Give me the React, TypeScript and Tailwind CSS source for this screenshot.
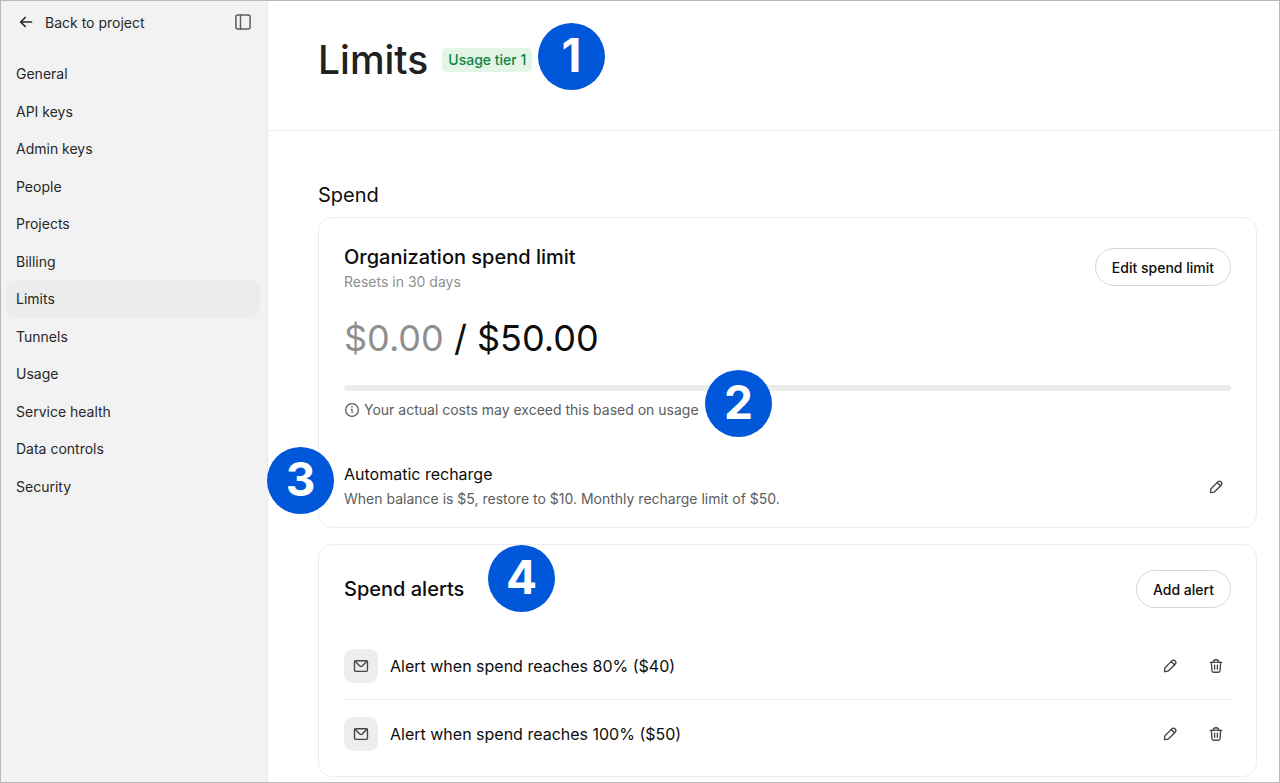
import type { ReactNode } from 'react';

const navItems = [
  'General',
  'API keys',
  'Admin keys',
  'People',
  'Projects',
  'Billing',
  'Limits',
  'Tunnels',
  'Usage',
  'Service health',
  'Data controls',
  'Security',
];

const alerts = ['Alert when spend reaches 80% ($40)', 'Alert when spend reaches 100% ($50)'];

function Icon({ className, children }: { className?: string; children: ReactNode }) {
  return (
    <svg
      viewBox="0 0 16 16"
      fill="none"
      stroke="currentColor"
      strokeWidth="1.35"
      strokeLinecap="round"
      strokeLinejoin="round"
      aria-hidden="true"
      className={className}
    >
      {children}
    </svg>
  );
}

function ArrowLeftIcon() {
  return (
    <svg viewBox="0 0 16 16" fill="none" stroke="currentColor" strokeWidth="1.7" strokeLinecap="round" strokeLinejoin="round" aria-hidden="true" className="size-4">
      <path d="M13.500 8H2.900M7.200 3.500 2.700 8l4.500 4.500" />
    </svg>
  );
}

function SidebarIcon() {
  return (
    <Icon className="size-4">
      <rect x="0.9" y="0.9" width="14.2" height="14.2" rx="2" strokeWidth="1.5" />
      <path d="M5.500 1v14" strokeWidth="1.4" />
    </Icon>
  );
}

function InfoIcon() {
  return (
    <Icon className="size-4">
      <circle cx="8" cy="8" r="6.400" strokeWidth="1.3" />
      <path d="M7.200 7.400H8.100v3.200" strokeWidth="1.2" />
      <circle cx="8" cy="5.100" r="0.8" fill="currentColor" stroke="none" />
    </Icon>
  );
}

function PencilIcon() {
  return (
    <Icon className="size-4">
      <path d="M2.500 13.600 2.700 10.900Q2.800 10 3.500 9.300L9.600 3.100Q11.500 1.300 13.200 2.900 14.700 4.600 13 6.400L6.800 12.500Q6.100 13.200 5.200 13.300Z" />
      <path d="M8.900 3.900Q9.700 3.900 10.900 5.100T12.200 7.100" />
    </Icon>
  );
}

function TrashIcon() {
  return (
    <Icon className="size-4">
      <path d="M2.300 4.300h11.400M5 4.200C5.300 2.600 6.300 1.700 8 1.700s2.700.9 3 2.500M3.400 4.500l.5 8.200q.1 1.500 1.600 1.500h5q1.500 0 1.600-1.500l.5-8.200M6.600 7.200v4M9.400 7.200v4" />
    </Icon>
  );
}

function MailIcon() {
  return (
    <Icon className="size-4">
      <rect x="1.500" y="2.700" width="13" height="10.600" rx="1.300" />
      <path d="M2.100 3.300 6.800 8q1.200 1.100 2.400 0l4.700-4.700" />
    </Icon>
  );
}

function IconButton({ label, children }: { label: string; children: ReactNode }) {
  return (
    <button type="button" aria-label={label} className="flex size-[30px] items-center justify-center rounded-full text-[#454545] hover:bg-gray-100">
      {children}
    </button>
  );
}

function PillButton({ children }: { children: ReactNode }) {
  return (
    <button type="button" className="h-[38px] shrink-0 rounded-full border border-[#d6d6d6] px-4 text-[14px] font-medium text-[#0d0d0d] hover:bg-gray-50">
      {children}
    </button>
  );
}

function Marker({ className, children }: { className: string; children: ReactNode }) {
  return (
    <span className={`absolute flex size-[67px] items-center justify-center rounded-full bg-[#0057d9] pb-[3px] text-[46px] leading-none font-bold text-white ${className}`}>
      {children}
    </span>
  );
}

export default function App() {
  return (
    <div className="flex min-h-screen border border-[#b9b9b9] bg-white font-['Inter','Liberation_Sans',sans-serif] text-[#0d0d0d]">
      <aside className="w-[267px] shrink-0 border-r border-[#e8e8e8] bg-[#f2f2f2] text-[14px] text-[#282828]">
        <div className="flex h-[42px] items-center justify-between pr-4 pl-[17px]">
          <a href="#project" className="flex items-center gap-[11px]">
            <ArrowLeftIcon />
            Back to project
          </a>
          <button type="button" aria-label="Toggle sidebar" className="text-[#5d5d5d]">
            <SidebarIcon />
          </button>
        </div>
        <nav aria-label="Settings" className="mt-3 pr-[7px] pl-[5px]">
          <ul className="grid h-[450px] auto-rows-fr">
            {navItems.map((item) => (
              <li key={item} className="grid">
                <a
                  href={`#${item.toLowerCase().replace(' ', '-')}`}
                  aria-current={item === 'Limits' ? 'page' : undefined}
                  className={item === 'Limits' ? 'flex items-center rounded-[10px] bg-[#ececec] px-[10px]' : 'flex items-center px-[10px]'}
                >
                  {item}
                </a>
              </li>
            ))}
          </ul>
        </nav>
      </aside>

      <main className="min-w-0 flex-1">
        <header className="relative flex h-[130px] gap-[14px] border-b border-[#ededed] pt-[35px] pl-[50px]">
          <h1 className="text-[39px] leading-[48px] font-medium text-[#212121]">Limits</h1>
          <span className="mt-3 h-6 rounded-[5px] bg-[#e3f5e7] px-[6px] text-[14px] leading-6 font-medium text-[#0c8440]">Usage tier 1</span>
          <Marker className="top-[22px] left-[270px]">1</Marker>
        </header>

        <div className="pt-[50px] pr-[22px] pb-[5px] pl-[50px]">
          <h2 className="text-[20px] leading-7">Spend</h2>

          <section aria-labelledby="spend-limit" className="relative mt-2 rounded-[14px] border border-[#ededed] px-[25px] pt-[25px] pb-4">
            <div className="flex items-start justify-between">
              <div>
                <h3 id="spend-limit" className="text-[20px] leading-7 font-medium">Organization spend limit</h3>
                <p className="text-[14px] leading-[22px] text-[#8f8f8f]">Resets in 30 days</p>
              </div>
              <div className="pt-[5px]">
                <PillButton>Edit spend limit</PillButton>
              </div>
            </div>
            <p className="mt-[22px] text-[36px] leading-[46px]">
              <span className="text-[#8f8f8f]">$0.00</span> / $50.00
            </p>
            <div role="progressbar" aria-label="Organization spend" aria-valuemin={0} aria-valuemax={50} aria-valuenow={0} className="mt-6 h-[6px] rounded-full bg-[#ececec]" />
            <p className="mt-2 flex items-center gap-1 text-[14px] leading-[22px] text-[#5d5d5d]">
              <InfoIcon />
              Your actual costs may exceed this based on usage
            </p>
            <div className="mt-[41px] flex items-center justify-between">
              <div>
                <h4 className="text-[16px] leading-6">Automatic recharge</h4>
                <p className="mt-px text-[14px] leading-6 text-[#5d5d5d]">When balance is $5, restore to $10. Monthly recharge limit of $50.</p>
              </div>
              <IconButton label="Edit automatic recharge">
                <PencilIcon />
              </IconButton>
            </div>
            <Marker className="top-[152px] left-[386px]">2</Marker>
            <Marker className="top-[229px] -left-[52px]">3</Marker>
          </section>

          <section aria-labelledby="spend-alerts" className="relative mt-4 rounded-[14px] border border-[#ededed] px-[25px] pt-[25px] pb-2">
            <div className="flex items-center justify-between">
              <h3 id="spend-alerts" className="text-[20px] leading-7 font-medium">Spend alerts</h3>
              <PillButton>Add alert</PillButton>
            </div>
            <ul className="mt-6 divide-y divide-[#ededed]">
              {alerts.map((alert) => (
                <li key={alert} className="flex h-[68px] items-center">
                  <span className="flex size-[34px] shrink-0 items-center justify-center rounded-[9px] bg-[#ededed] text-[#454545]">
                    <MailIcon />
                  </span>
                  <span className="ml-3 flex-1 text-[16px]">{alert}</span>
                  <div className="flex gap-4">
                    <IconButton label={`Edit: ${alert}`}>
                      <PencilIcon />
                    </IconButton>
                    <IconButton label={`Delete: ${alert}`}>
                      <TrashIcon />
                    </IconButton>
                  </div>
                </li>
              ))}
            </ul>
            <Marker className="top-0 left-[169px]">4</Marker>
          </section>
        </div>
      </main>
    </div>
  );
}
